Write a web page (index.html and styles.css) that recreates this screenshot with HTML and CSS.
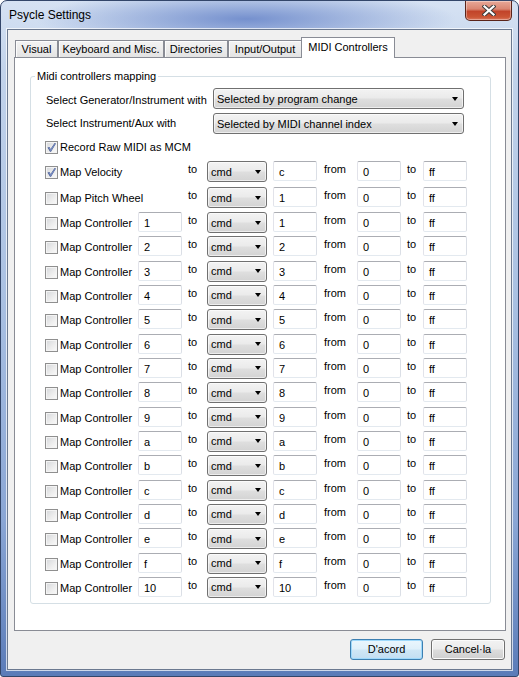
FILE: index.html
```html
<!DOCTYPE html>
<html>
<head>
<meta charset="utf-8">
<title>Psycle Settings</title>
<link rel="stylesheet" href="styles.css">
</head>
<body>
<div class="window">
  <div class="titlebar">
    <span class="title">Psycle Settings</span>
    <div class="close">
      <svg width="14" height="11" viewBox="0 0 14 11"><path d="M2.5 1.5 L11.5 9.5 M11.5 1.5 L2.5 9.5" stroke="#3b3b3b" stroke-width="4.2" stroke-linecap="square"/><path d="M2.5 1.5 L11.5 9.5 M11.5 1.5 L2.5 9.5" stroke="#ffffff" stroke-width="2.2" stroke-linecap="square"/></svg>
    </div>
  </div>
  <div class="client">
    <div class="tabs">
      <div class="tab w1">Visual</div>
      <div class="tab w2">Keyboard and Misc.</div>
      <div class="tab w3">Directories</div>
      <div class="tab w4">Input/Output</div>
      <div class="tab active">MIDI Controllers</div>
    </div>
    <div class="panel">
      <fieldset class="group">
        <legend>Midi controllers mapping</legend>
        <div class="selrow first"><span class="sellabel">Select Generator/Instrument with</span><div class="combo wide"><span>Selected by program change</span><i class="arrow"></i></div></div>
        <div class="selrow second"><span class="sellabel">Select Instrument/Aux with</span><div class="combo wide"><span>Selected by MIDI channel index</span><i class="arrow"></i></div></div>
        <div class="check rec"><span class="cb on"><svg width="11" height="11" viewBox="0 0 11 11"><path d="M1.5 5.5 L3.5 5 L4.6 7 L8.6 1 L10 1.6 L5 9.8 L4 9.8 Z" fill="#4a5e95"/><path d="M2.4 5.8 L3.3 5.6 L4.6 7.6 L8.9 1.5 L9.5 1.8 L4.8 9.2 Z" fill="#7d92c7"/></svg></span><span class="ctext">Record Raw MIDI as MCM</span></div>
        <div class="map">
          <div class="mrow vel">
            <div class="check span2"><span class="cb on"><svg width="11" height="11" viewBox="0 0 11 11"><path d="M1.5 5.5 L3.5 5 L4.6 7 L8.6 1 L10 1.6 L5 9.8 L4 9.8 Z" fill="#4a5e95"/><path d="M2.4 5.8 L3.3 5.6 L4.6 7.6 L8.9 1.5 L9.5 1.8 L4.8 9.2 Z" fill="#7d92c7"/></svg></span><span class="ctext">Map Velocity</span></div>
            <span class="lbl to">to</span><div class="combo small"><span>cmd</span><i class="arrow"></i></div><div class="box val">c</div><span class="lbl from">from</span><div class="box">0</div><span class="lbl to2">to</span><div class="box">ff</div>
          </div>
          <div class="mrow pw">
            <div class="check span2"><span class="cb"></span><span class="ctext">Map Pitch Wheel</span></div>
            <span class="lbl to">to</span><div class="combo small"><span>cmd</span><i class="arrow"></i></div><div class="box val">1</div><span class="lbl from">from</span><div class="box">0</div><span class="lbl to2">to</span><div class="box">ff</div>
          </div>
          <div class="mrow"><div class="check"><span class="cb"></span><span class="ctext">Map Controller</span></div><div class="box">1</div><span class="lbl to">to</span><div class="combo small"><span>cmd</span><i class="arrow"></i></div><div class="box val">1</div><span class="lbl from">from</span><div class="box">0</div><span class="lbl to2">to</span><div class="box">ff</div></div>
          <div class="mrow"><div class="check"><span class="cb"></span><span class="ctext">Map Controller</span></div><div class="box">2</div><span class="lbl to">to</span><div class="combo small"><span>cmd</span><i class="arrow"></i></div><div class="box val">2</div><span class="lbl from">from</span><div class="box">0</div><span class="lbl to2">to</span><div class="box">ff</div></div>
          <div class="mrow"><div class="check"><span class="cb"></span><span class="ctext">Map Controller</span></div><div class="box">3</div><span class="lbl to">to</span><div class="combo small"><span>cmd</span><i class="arrow"></i></div><div class="box val">3</div><span class="lbl from">from</span><div class="box">0</div><span class="lbl to2">to</span><div class="box">ff</div></div>
          <div class="mrow"><div class="check"><span class="cb"></span><span class="ctext">Map Controller</span></div><div class="box">4</div><span class="lbl to">to</span><div class="combo small"><span>cmd</span><i class="arrow"></i></div><div class="box val">4</div><span class="lbl from">from</span><div class="box">0</div><span class="lbl to2">to</span><div class="box">ff</div></div>
          <div class="mrow"><div class="check"><span class="cb"></span><span class="ctext">Map Controller</span></div><div class="box">5</div><span class="lbl to">to</span><div class="combo small"><span>cmd</span><i class="arrow"></i></div><div class="box val">5</div><span class="lbl from">from</span><div class="box">0</div><span class="lbl to2">to</span><div class="box">ff</div></div>
          <div class="mrow"><div class="check"><span class="cb"></span><span class="ctext">Map Controller</span></div><div class="box">6</div><span class="lbl to">to</span><div class="combo small"><span>cmd</span><i class="arrow"></i></div><div class="box val">6</div><span class="lbl from">from</span><div class="box">0</div><span class="lbl to2">to</span><div class="box">ff</div></div>
          <div class="mrow"><div class="check"><span class="cb"></span><span class="ctext">Map Controller</span></div><div class="box">7</div><span class="lbl to">to</span><div class="combo small"><span>cmd</span><i class="arrow"></i></div><div class="box val">7</div><span class="lbl from">from</span><div class="box">0</div><span class="lbl to2">to</span><div class="box">ff</div></div>
          <div class="mrow"><div class="check"><span class="cb"></span><span class="ctext">Map Controller</span></div><div class="box">8</div><span class="lbl to">to</span><div class="combo small"><span>cmd</span><i class="arrow"></i></div><div class="box val">8</div><span class="lbl from">from</span><div class="box">0</div><span class="lbl to2">to</span><div class="box">ff</div></div>
          <div class="mrow"><div class="check"><span class="cb"></span><span class="ctext">Map Controller</span></div><div class="box">9</div><span class="lbl to">to</span><div class="combo small"><span>cmd</span><i class="arrow"></i></div><div class="box val">9</div><span class="lbl from">from</span><div class="box">0</div><span class="lbl to2">to</span><div class="box">ff</div></div>
          <div class="mrow"><div class="check"><span class="cb"></span><span class="ctext">Map Controller</span></div><div class="box">a</div><span class="lbl to">to</span><div class="combo small"><span>cmd</span><i class="arrow"></i></div><div class="box val">a</div><span class="lbl from">from</span><div class="box">0</div><span class="lbl to2">to</span><div class="box">ff</div></div>
          <div class="mrow"><div class="check"><span class="cb"></span><span class="ctext">Map Controller</span></div><div class="box">b</div><span class="lbl to">to</span><div class="combo small"><span>cmd</span><i class="arrow"></i></div><div class="box val">b</div><span class="lbl from">from</span><div class="box">0</div><span class="lbl to2">to</span><div class="box">ff</div></div>
          <div class="mrow"><div class="check"><span class="cb"></span><span class="ctext">Map Controller</span></div><div class="box">c</div><span class="lbl to">to</span><div class="combo small"><span>cmd</span><i class="arrow"></i></div><div class="box val">c</div><span class="lbl from">from</span><div class="box">0</div><span class="lbl to2">to</span><div class="box">ff</div></div>
          <div class="mrow"><div class="check"><span class="cb"></span><span class="ctext">Map Controller</span></div><div class="box">d</div><span class="lbl to">to</span><div class="combo small"><span>cmd</span><i class="arrow"></i></div><div class="box val">d</div><span class="lbl from">from</span><div class="box">0</div><span class="lbl to2">to</span><div class="box">ff</div></div>
          <div class="mrow"><div class="check"><span class="cb"></span><span class="ctext">Map Controller</span></div><div class="box">e</div><span class="lbl to">to</span><div class="combo small"><span>cmd</span><i class="arrow"></i></div><div class="box val">e</div><span class="lbl from">from</span><div class="box">0</div><span class="lbl to2">to</span><div class="box">ff</div></div>
          <div class="mrow"><div class="check"><span class="cb"></span><span class="ctext">Map Controller</span></div><div class="box">f</div><span class="lbl to">to</span><div class="combo small"><span>cmd</span><i class="arrow"></i></div><div class="box val">f</div><span class="lbl from">from</span><div class="box">0</div><span class="lbl to2">to</span><div class="box">ff</div></div>
          <div class="mrow"><div class="check"><span class="cb"></span><span class="ctext">Map Controller</span></div><div class="box">10</div><span class="lbl to">to</span><div class="combo small"><span>cmd</span><i class="arrow"></i></div><div class="box val">10</div><span class="lbl from">from</span><div class="box">0</div><span class="lbl to2">to</span><div class="box">ff</div></div>
        </div>
      </fieldset>
    </div>
    <div class="buttons">
      <div class="btn default">D'acord</div>
      <div class="btn">Cancel·la</div>
    </div>
  </div>
</div>
</body>
</html>
```
FILE: styles.css
```css
* { box-sizing: border-box; }
html, body { margin: 0; padding: 0; }
body {
  width: 519px;
  height: 677px;
  background: #ffffff;
  font-family: "Liberation Sans", Arial, sans-serif;
  font-size: 11px;
  line-height: 13px;
  color: #000;
  overflow: hidden;
}
.window {
  width: 519px;
  height: 677px;
  border: 1px solid #33466a;
  border-radius: 7px 7px 3px 3px;
  padding: 0 6px 6px 6px;
  display: flex;
  flex-direction: column;
  background:
    radial-gradient(ellipse 210px 30px at 245px 18px, rgba(112,140,204,0.95), rgba(112,140,204,0) 100%),
    linear-gradient(180deg, #d6e2f3 0px, #c2d3eb 70px, #a9c0e2 300px, #8aa6d5 520px, #5a7bb8 677px);
}
.titlebar {
  height: 28px;
  display: flex;
  align-items: flex-start;
}
.title {
  margin: 6px 0 0 2px;
  font-size: 12px;
  line-height: 16px;
  color: #000;
}
.close {
  margin-left: auto;
  width: 47px;
  height: 20px;
  border: 1px solid #5a241a;
  border-top: none;
  border-radius: 0 0 5px 5px;
  background: linear-gradient(180deg, #e7a898 0%, #d98672 42%, #c2442a 55%, #cb5535 85%, #dc7a62 100%);
  box-shadow: inset 0 0 0 1px rgba(255,255,255,0.35);
  display: flex;
  align-items: center;
  justify-content: center;
}
.close svg { display: block; }
.client {
  flex: 1;
  border: 1px solid #6b7990;
  box-shadow: 0 0 0 1px rgba(255,255,255,0.7);
  background: #f0f0f0;
  padding: 7px 5px 0 6px;
  display: flex;
  flex-direction: column;
}
.tabs {
  height: 20px;
  display: flex;
  align-items: flex-end;
  padding-left: 1px;
}
.tab {
  height: 17px;
  border: 1px solid #898c95;
  border-bottom: none;
  background: linear-gradient(180deg, #f3f3f3 0%, #ececec 50%, #e3e3e3 100%);
  box-shadow: inset 1px 1px 0 #fcfcfc;
  text-align: center;
  padding-top: 2px;
  line-height: 13px;
  white-space: nowrap;
}
.w1 { width: 43px; }
.w2 { width: 106px; }
.w3 { width: 64px; }
.w4 { width: 74px; }
.tab.active {
  position: relative;
  z-index: 1;
  width: 94px;
  height: 21px;
  margin-left: -1px;
  margin-bottom: -1px;
  background: #ffffff;
  box-shadow: none;
  padding-top: 3px;
}
.panel {
  flex: 1;
  border: 1px solid #898c95;
  background: #ffffff;
  padding: 12px 14px 0 15px;
}
.group {
  margin: 0;
  border: 1px solid #d5dfe5;
  border-radius: 3px;
  padding: 5px 0 2px 4px;
  min-width: 0;
}
.group legend {
  padding: 0 2px;
  line-height: 13px;
}
.selrow {
  display: flex;
  align-items: flex-start;
  height: 21px;
  margin-left: 10px;
}
.selrow.second { margin-top: 4px; }
.sellabel {
  width: 168px;
  padding-left: 1px;
}
.first .sellabel { padding-top: 6px; }
.second .sellabel { padding-top: 4px; }
.combo {
  height: 21px;
  border: 1px solid #707070;
  border-radius: 3px;
  background: linear-gradient(180deg, #f3f3f3 0%, #ebebeb 45%, #dedede 55%, #d3d3d3 100%);
  box-shadow: inset 0 0 0 1px rgba(255,255,255,0.6);
  display: flex;
  align-items: center;
  justify-content: space-between;
  padding: 0 5px 0 3px;
}
.combo span { line-height: 13px; padding-top: 1px; }
.combo.wide { width: 251px; }
.combo.small { width: 60px; }
.arrow {
  width: 0;
  height: 0;
  border-left: 3.5px solid transparent;
  border-right: 3.5px solid transparent;
  border-top: 4px solid #000;
}
.check {
  display: flex;
  align-items: flex-start;
}
.check.rec {
  margin: 7px 0 0 10px;
}
.cb {
  width: 13px;
  height: 13px;
  border: 1px solid #8f8f8f;
  background: linear-gradient(135deg, #d5d7da 0%, #eeeeee 60%, #fafafa 100%);
  box-shadow: inset 0 0 0 1px #f4f4f4;
  display: flex;
  align-items: center;
  justify-content: center;
  flex: none;
}
.cb svg { display: block; }
.ctext { margin-left: 2px; }
.map {
  margin: 7px 0 0 10px;
}
.mrow {
  display: grid;
  grid-template-columns: 93px 44px 25px 60px 50px 40px 44px 22px 44px;
  height: 24.33px;
  align-items: start;
}
.mrow.vel { height: 26px; }
.mrow.pw { height: 25px; }
.mrow .check { padding-top: 5px; }
.mrow .check.span2 { grid-column: span 2; }
.box {
  width: 44px;
  height: 20px;
  border: 1px solid;
  border-color: #abadb3 #dbdfe6 #e3e9ef #e2e3ea;
  border-radius: 2px;
  background: #fff;
  padding: 4px 0 0 5px;
  line-height: 13px;
}
.box.val { margin-left: 6px; }
.lbl { padding-top: 2px; }
.lbl.to { padding-left: 6px; }
.lbl.from { padding-left: 7px; }
.lbl.to2 { padding-left: 6px; }
.buttons {
  height: 38px;
  display: flex;
  justify-content: flex-end;
  align-items: flex-start;
  gap: 8px;
  padding: 8px 1px 0 0;
}
.btn {
  width: 73px;
  height: 21px;
  border: 1px solid #707070;
  border-radius: 3px;
  background: linear-gradient(180deg, #f2f2f2 0%, #ebebeb 49%, #dddddd 51%, #cfcfcf 100%);
  box-shadow: inset 0 0 0 1px #fbfbfb;
  text-align: center;
  line-height: 13px;
  padding-top: 3px;
}
.btn + .btn { width: 74px; }
.btn.default {
  border-color: #3c7fb1;
  box-shadow: inset 0 0 0 1px #9fd9fb;
  background: linear-gradient(180deg, #eaf6fd 0%, #dff0fa 49%, #d0e7f6 51%, #c2def2 100%);
}
```
